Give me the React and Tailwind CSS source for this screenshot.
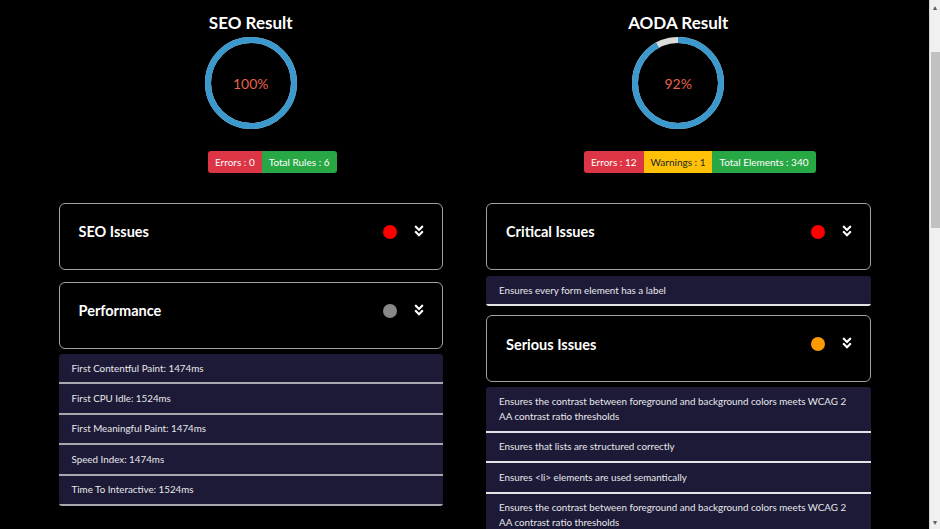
import React from "react";
import { FaAngleDoubleDown } from "react-icons/fa";

const font = { fontFamily: 'Lato, "Open Sans", sans-serif' };

function Ring({ pct }) {
  const r = 43;
  const c = 2 * Math.PI * r;
  const blue = (pct / 100) * c;
  return (
    <div className="relative w-[92px] h-[92px]">
      <svg width="92" height="92" viewBox="0 0 92 92">
        <circle cx="46" cy="46" r={r} fill="none" stroke="#dcdcdc" strokeWidth="6" />
        <circle
          cx="46"
          cy="46"
          r={r}
          fill="none"
          stroke="#3b99cd"
          strokeWidth="6"
          strokeDasharray={`${blue} ${c}`}
          transform="rotate(-90 46 46)"
        />
      </svg>
      <div className="absolute inset-0 flex items-center justify-center text-[14px] text-[#e8604f]">
        {pct}%
      </div>
    </div>
  );
}

function Badge({ children, color }) {
  const cls = {
    red: "bg-[#dc3545] text-white",
    yellow: "bg-[#ffc107] text-[#212529]",
    green: "bg-[#28a745] text-white",
  }[color];
  return <div className={`h-[22px] px-[7px] flex items-center text-[10px] ${cls}`}>{children}</div>;
}

function Header({ title, pct, badges }) {
  return (
    <div className="flex flex-col items-center">
      <div className="text-[17px] font-bold text-white leading-[24px] mt-[11px]">{title}</div>
      <div className="mt-[2px]">
        <Ring pct={pct} />
      </div>
      <div className="mt-[22px] ml-[43px] flex rounded-[3px] overflow-hidden">
        {badges.map((b, i) => (
          <Badge key={i} color={b[1]}>
            {b[0]}
          </Badge>
        ))}
      </div>
    </div>
  );
}

function Card({ title, dot }) {
  return (
    <div className="h-[67px] border border-[#a0a0a0] rounded-[6px] flex items-center pl-[19px] pr-[16px] pb-[9px]">
      <div className="flex-1 text-[14.5px] font-bold text-white">{title}</div>
      <div className={`w-[14px] h-[14px] rounded-full ${dot}`} />
      <FaAngleDoubleDown className="text-white ml-[15px] mb-[2px]" size={14} />
    </div>
  );
}

function List({ items, line }) {
  return (
    <div className="rounded-[3px] overflow-hidden bg-[#1c1a36]">
      {items.map((t, i) => (
        <div
          key={i}
          className={`px-[13px] py-[6.7px] leading-[15px] text-[9.8px] text-[#e8e8ec] border-b-2 ${line}`}
        >
          {t}
        </div>
      ))}
    </div>
  );
}

export default function App() {
  return (
    <div className="w-[940px] h-[529px] overflow-hidden bg-black flex" style={font}>
      <div className="w-[929px] h-full overflow-hidden">
        <div className="w-[812px] mx-auto grid grid-cols-2 gap-x-[43px]">
          <div className="flex flex-col">
            <Header
              title="SEO Result"
              pct={100}
              badges={[
                ["Errors : 0", "red"],
                ["Total Rules : 6", "green"],
              ]}
            />
            <div className="mt-[30px]">
              <Card title="SEO Issues" dot="bg-[#ff0000]" />
            </div>
            <div className="mt-[12px]">
              <Card title="Performance" dot="bg-[#888888]" />
            </div>
            <div className="mt-[5px]">
              <List
                line="border-[#a8a8b0]"
                items={[
                  "First Contentful Paint: 1474ms",
                  "First CPU Idle: 1524ms",
                  "First Meaningful Paint: 1474ms",
                  "Speed Index: 1474ms",
                  "Time To Interactive: 1524ms",
                ]}
              />
            </div>
          </div>
          <div className="flex flex-col">
            <Header
              title="AODA Result"
              pct={92}
              badges={[
                ["Errors : 12", "red"],
                ["Warnings : 1", "yellow"],
                ["Total Elements : 340", "green"],
              ]}
            />
            <div className="mt-[30px]">
              <Card title="Critical Issues" dot="bg-[#ff0000]" />
            </div>
            <div className="mt-[6px]">
              <List line="border-[#e4e4e8]" items={["Ensures every form element has a label"]} />
            </div>
            <div className="mt-[9px]">
              <Card title="Serious Issues" dot="bg-[#ff9900]" />
            </div>
            <div className="mt-[5px]">
              <List
                line="border-[#e4e4e8]"
                items={[
                  "Ensures the contrast between foreground and background colors meets WCAG 2 AA contrast ratio thresholds",
                  "Ensures that lists are structured correctly",
                  "Ensures <li> elements are used semantically",
                  "Ensures the contrast between foreground and background colors meets WCAG 2 AA contrast ratio thresholds",
                ]}
              />
            </div>
          </div>
        </div>
      </div>
      <div className="w-[11px] h-full bg-[#f0f0f0] border-l border-[#d8d8d8] flex flex-col items-center">
        <div className="h-[14px] flex items-center justify-center text-[7px] text-[#606060] leading-none">▲</div>
        <div className="w-[9px] h-[176px] bg-[#c1c1c1] mt-[38px]" />
        <div className="flex-1" />
        <div className="h-[14px] flex items-center justify-center text-[7px] text-[#606060] leading-none">▼</div>
      </div>
    </div>
  );
}
